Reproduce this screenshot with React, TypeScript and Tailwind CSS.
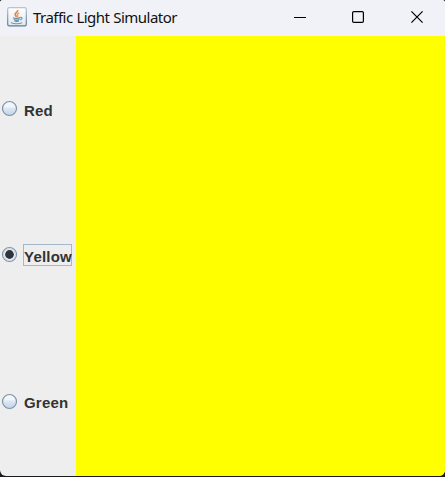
import React from "react";

type Light = "Red" | "Yellow" | "Green";

const lights: Light[] = ["Red", "Yellow", "Green"];

function JavaIcon() {
  return (
    <svg width="20" height="20" viewBox="0 0 20 20" fill="none" className="shrink-0">
      <defs>
        <linearGradient id="tile" x1="0" y1="0" x2="0" y2="1">
          <stop offset="0" stopColor="#ffffff" />
          <stop offset="1" stopColor="#e3e8ed" />
        </linearGradient>
        <linearGradient id="tileEdge" x1="0" y1="0" x2="0" y2="1">
          <stop offset="0" stopColor="#b7c5d0" />
          <stop offset="1" stopColor="#527d99" />
        </linearGradient>
      </defs>
      <rect x="0.7" y="0.7" width="18.6" height="18.1" rx="1.6" fill="url(#tile)" stroke="url(#tileEdge)" strokeWidth="1.2" />
      <path d="M10.6 3.2c.8 1.6-2.7 2.6-2.4 4.3.1 1 1 1.5 1.5 2.3" stroke="#e8843c" strokeWidth="1.8" />
      <path d="M12.3 5.9c-2 .8-2.4 1.5-1.6 2.3.6.7.2 1.3-.4 1.8" stroke="#ec985b" strokeWidth="1.2" />
      <path d="M6 10.7c1.5.8 5.5.8 7.3 0M6.8 12.5c1.5.7 4 .7 5.6 0M7.4 14c1.3.5 3.3.5 4.6 0" stroke="#5f8aa9" strokeWidth="1.3" />
      <path d="M13.2 10.4c2.7-.4 2.3 2-.2 2.6M4.5 15.3c-.7 1.8 8.3 2 10.6.3" stroke="#7297b1" strokeWidth="1.1" />
    </svg>
  );
}

function Radio({ on }: { on: boolean }) {
  return (
    <svg width="17" height="17" viewBox="0 0 17 17" fill="none" className="mt-[2px] shrink-0 group-last:mt-[3px]">
      <defs>
        <linearGradient id="knob" x1="0" y1="0" x2="0" y2="1">
          <stop offset="0" stopColor="#f3f7fb" />
          <stop offset="0.35" stopColor="#f1f6fb" />
          <stop offset="0.5" stopColor="#dce7f3" />
          <stop offset="1" stopColor="#c0d3e7" />
        </linearGradient>
      </defs>
      <circle cx="8.5" cy="8.5" r="7" fill={on ? "#f7fafd" : "url(#knob)"} stroke="#7f92a6" strokeWidth="1.2" />
      {on && <circle cx="8.5" cy="8.5" r="5.9" stroke="#c2d5e8" strokeWidth="1.2" />}
      {on && <circle cx="8.5" cy="8.5" r="4.4" fill="#303338" />}
    </svg>
  );
}

export default function App() {
  const [selected, setSelected] = React.useState<Light>("Yellow");
  const color = { Red: "bg-[#ff0000]", Yellow: "bg-[#ffff00]", Green: "bg-[#00ff00]" }[selected];

  return (
    <div className="h-[477px] w-[445px] overflow-hidden bg-[#1c1820] pb-px">
      <div className="flex h-[476px] flex-col overflow-hidden rounded-t-[3px] rounded-b-[6px] bg-[#eeeeee]">
        <header className="flex h-9 shrink-0 items-center bg-[#f0f2f8] pl-[7px]">
          <div className="-mt-[3px]">
            <JavaIcon />
          </div>
          <h1 className="-mt-[2px] ml-1.5 flex-1 whitespace-nowrap font-['Noto_Sans',sans-serif] text-[15px] leading-5 tracking-[-0.53px] [word-spacing:0.5px] text-[#111111]">
            Traffic Light Simulator
          </h1>
          <div className="flex h-full text-black">
            <button aria-label="Minimize" className="flex w-[58px] items-center justify-center">
              <svg width="12" height="12" fill="none" className="-mt-[3px]">
                <path d="M0 6.5h12" stroke="currentColor" />
              </svg>
            </button>
            <button aria-label="Maximize" className="flex w-[58px] items-center justify-center">
              <svg width="12" height="12" fill="none" className="-mt-[2px]">
                <rect x="0.6" y="0.6" width="10.8" height="10.8" rx="1.2" stroke="currentColor" strokeWidth="1.2" />
              </svg>
            </button>
            <button aria-label="Close" className="flex w-[58px] items-center justify-center pl-0.5">
              <svg width="12" height="12" fill="none" className="-mt-[2px]">
                <path d="M.4.4l11.2 11.2M11.6.4L.4 11.6" stroke="currentColor" strokeWidth="1.2" />
              </svg>
            </button>
          </div>
        </header>
        <main className="flex min-h-0 flex-1">
          <div className="grid w-[76px] grid-rows-[146px_146px_146px] content-start">
            {lights.map((light) => (
              <button
                key={light}
                onClick={() => setSelected(light)}
                className="group flex items-start pt-[62px] pl-px"
              >
                <Radio on={selected === light} />
                <span
                  className={`ml-[5px] flex h-[22px] w-[49px] items-center border pt-[4px] font-['Liberation_Sans',Arial,sans-serif] text-[15px] leading-[18px] font-bold tracking-[0.2px] text-[#333333] ${
                    selected === light ? "border-[#a3b8cc]" : "border-transparent"
                  }`}
                >
                  {light}
                </span>
              </button>
            ))}
          </div>
          <div className={`flex-1 ${color}`} />
        </main>
      </div>
    </div>
  );
}
